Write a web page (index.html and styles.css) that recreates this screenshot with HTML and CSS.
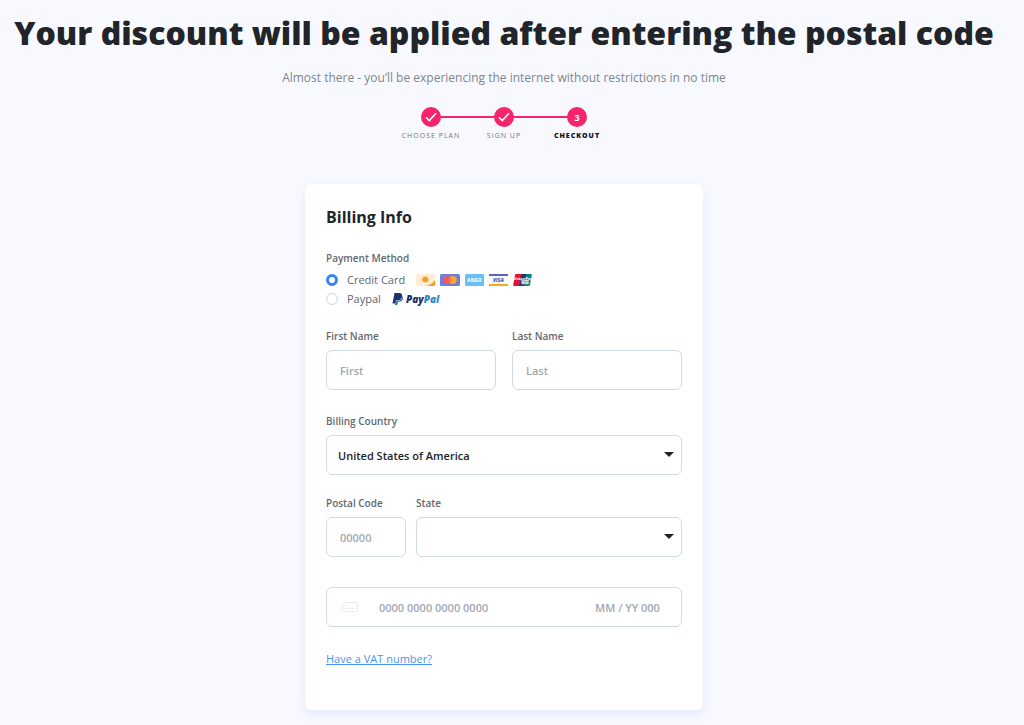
FILE: index.html
```
<!DOCTYPE html>
<html lang="en">
  <head>
    <meta charset="utf-8" />
    <meta name="viewport" content="width=device-width, initial-scale=1" />
    <title>Checkout</title>
    <link rel="stylesheet" href="styles.css" />
  </head>
  <body>
    <header class="page-header">
      <h1>Your discount will be applied after entering the postal code</h1>
      <p class="subtitle">Almost there - you’ll be experiencing the internet without restrictions in no time</p>
      <ol class="steps">
        <li class="step">
          <span class="step-dot">
            <svg width="12" height="10" viewBox="0 0 12 10" fill="none" stroke="#fff" stroke-width="1.6"><path d="M1 5.2 4.3 8.5 11 1.2" /></svg>
          </span>
          <span class="step-name">CHOOSE PLAN</span>
        </li>
        <li class="step">
          <span class="step-dot">
            <svg width="12" height="10" viewBox="0 0 12 10" fill="none" stroke="#fff" stroke-width="1.6"><path d="M1 5.2 4.3 8.5 11 1.2" /></svg>
          </span>
          <span class="step-name">SIGN UP</span>
        </li>
        <li class="step current">
          <span class="step-dot">3</span>
          <span class="step-name">CHECKOUT</span>
        </li>
      </ol>
    </header>

    <main class="card">
      <h2>Billing Info</h2>
      <form>
        <fieldset class="methods">
          <legend>Payment Method</legend>
          <div class="method">
            <input type="radio" name="method" id="creditCard" checked />
            <label for="creditCard">Credit Card</label>
            <span class="brands">
              <!-- Discover -->
              <svg width="19" height="12" viewBox="0 0 19 12">
                <rect width="19" height="12" rx="1.5" fill="#feebd3" />
                <path d="M19 6V10.5Q19 12 17.5 12H10Q16 10.5 19 6Z" fill="#f9a01b" />
                <circle cx="9.3" cy="5.6" r="3" fill="#f6a01a" />
              </svg>
              <!-- Mastercard -->
              <svg width="20" height="12" viewBox="0 0 20 12">
                <rect width="20" height="12" rx="1.5" fill="#6b7fdc" />
                <circle cx="7.2" cy="6" r="4" fill="#ed5a5a" />
                <circle cx="12.8" cy="6" r="4" fill="#f9a533" />
                <path d="M10 3.1a4 4 0 0 1 0 5.8 4 4 0 0 1 0-5.8Z" fill="#f47738" />
              </svg>
              <!-- Amex -->
              <svg width="19" height="12" viewBox="0 0 19 12">
                <rect width="19" height="12" rx="1.5" fill="#69c0f0" />
                <text class="brand-text" x="9.5" y="8" fill="#e6f6fe">AMEX</text>
              </svg>
              <!-- Visa -->
              <svg width="19" height="12" viewBox="0 0 19 12">
                <rect width="19" height="12" fill="#f8f8fc" />
                <rect width="19" height="2" fill="#5b5fc7" />
                <rect y="10" width="19" height="2" fill="#f7a823" />
                <text class="brand-text slanted" x="9.5" y="8" fill="#4d57b5">VISA</text>
              </svg>
              <!-- UnionPay -->
              <svg width="19" height="12" viewBox="0 0 19 12">
                <path d="M3 0H9L6.5 12H1Q0 12 .2 11L2 1Q2.2 0 3 0Z" fill="#dd1436" />
                <path d="M8.5 0H14L11.5 12H6Z" fill="#173f6d" />
                <path d="M13.5 0H18Q19 0 18.8 1L17 11Q16.8 12 16 12H11Z" fill="#137d83" />
                <text class="union-text" x="10" y="5.5" fill="#fff">UnionPay</text>
                <text class="union-text" x="12" y="9.5" fill="#fff">银联</text>
              </svg>
            </span>
          </div>
          <div class="method">
            <input type="radio" name="method" id="paypal" />
            <label for="paypal">Paypal</label>
            <svg width="50" height="14" viewBox="0 0 50 14">
              <path d="M2.5 1H7.5Q10.5 1.2 10 4.4 9.3 8 5.7 8H4L3.4 11.5H.5Z" fill="#1f3264" />
              <path d="M10.4 3.8Q11.4 5 10.8 7 10 9.8 7 9.8H6L5.3 13H3L3.9 8.6H6Q9.8 8.4 10.4 3.8Z" fill="#2670ad" />
              <text class="paypal-text" x="14" y="11" fill="#1f3264">Pay<tspan fill="#3186c8">Pal</tspan></text>
            </svg>
          </div>
        </fieldset>

        <div class="row row-names">
          <div class="field">
            <label for="firstName">First Name</label>
            <input class="control" type="text" id="firstName" placeholder="First" />
          </div>
          <div class="field">
            <label for="lastName">Last Name</label>
            <input class="control" type="text" id="lastName" placeholder="Last" />
          </div>
        </div>

        <div class="row row-country">
          <div class="field">
            <label for="country">Billing Country</label>
            <div class="select-wrap">
              <select class="control" id="country">
                <option>United States of America</option>
              </select>
            </div>
          </div>
        </div>

        <div class="row row-region">
          <div class="field">
            <label for="postalCode">Postal Code</label>
            <input class="control" type="text" id="postalCode" placeholder="00000" />
          </div>
          <div class="field">
            <label for="state">State</label>
            <div class="select-wrap">
              <select class="control" id="state">
                <option></option>
              </select>
            </div>
          </div>
        </div>

        <div class="control card-entry">
          <svg width="16" height="10" viewBox="0 0 16 10" fill="none" stroke="#e9ebed">
            <rect x=".5" y=".5" width="15" height="9" rx="1" />
            <path d="M2.5 3.5H5M2.5 6.5H7M8 6.5H12" />
          </svg>
          <input class="card-number" type="text" aria-label="Card number" placeholder="0000 0000 0000 0000" />
          <input class="card-expiry" type="text" aria-label="Expiry date" placeholder="MM / YY" />
          <input class="card-cvc" type="text" aria-label="CVC" placeholder="000" />
        </div>

        <a class="vat-link" href="#">Have a VAT number?</a>
      </form>
    </main>
  </body>
</html>
```
FILE: styles.css
```
* {
  box-sizing: border-box;
}
body {
  margin: 0;
  padding: 12px 16px 15px 0;
  font-family: "Open Sans", sans-serif;
  color: #212529;
  background-color: #f8f9ff;
}
.page-header {
  text-align: center;
}
h1 {
  margin: 0;
  font-size: 32px;
  line-height: 42px;
  font-weight: 800;
}
.subtitle {
  margin: 12px 0 17px;
  font-size: 12px;
  line-height: 24px;
  color: #7d868c;
}
.steps {
  display: flex;
  justify-content: center;
  margin: 0;
  padding: 0;
  list-style: none;
}
.step {
  display: flex;
  flex-direction: column;
  align-items: center;
  gap: 4px;
  width: 73px;
  position: relative;
}
.step + .step::before {
  content: "";
  position: absolute;
  top: 9px;
  right: 50%;
  width: 100%;
  height: 2px;
  background-color: #f5246b;
}
.step-dot {
  display: flex;
  align-items: center;
  justify-content: center;
  width: 20px;
  height: 20px;
  border-radius: 50%;
  background-color: #f5246b;
  color: #fff;
  font-size: 9px;
  font-weight: 700;
  z-index: 1;
}
.step-name {
  font-size: 7px;
  line-height: 10px;
  letter-spacing: 1px;
  color: #6c757d;
  white-space: nowrap;
}
.current .step-name {
  font-weight: 800;
  color: #111;
}
.card {
  max-width: 398px;
  margin: 43px auto 0;
  padding: 21px 21px 42px;
  border-radius: 6px;
  background-color: #fff;
  box-shadow: 0 4px 12px rgba(80, 110, 255, 0.12);
}
h2 {
  margin: 0 0 22px;
  font-size: 16px;
  line-height: 24px;
  font-weight: 700;
}
.methods {
  margin: 0 0 21px;
  padding: 0;
  border: 0;
}
.methods legend,
.field label {
  display: block;
  padding: 0;
  font-size: 10px;
  line-height: 14px;
  font-weight: 600;
  color: #5f6870;
}
.methods legend {
  margin-bottom: 5px;
}
.method {
  display: flex;
  align-items: center;
  height: 19px;
  font-size: 11px;
  font-weight: 500;
  color: #5f6870;
}
.method input {
  appearance: none;
  width: 12px;
  height: 12px;
  margin: 0 9px 0 0;
  border: 1px solid #ced4da;
  border-radius: 50%;
}
.method input:checked {
  border: 3px solid #3485f7;
}
.method label {
  margin-right: 11px;
}
.brands {
  display: flex;
  gap: 5px;
}
.brand-text {
  font-size: 5px;
  font-weight: 800;
  text-anchor: middle;
}
.slanted {
  font-style: italic;
}
.union-text {
  font-family: "Open Sans", "Noto Sans CJK SC", sans-serif;
  font-size: 4px;
  font-weight: 700;
  text-anchor: middle;
}
.paypal-text {
  font-size: 10px;
  font-weight: 800;
  font-style: italic;
}
.row {
  display: grid;
}
.row-names {
  grid-template-columns: 1fr 1fr;
  gap: 16px;
  margin-bottom: 24px;
}
.row-country {
  margin-bottom: 21px;
}
.row-region {
  grid-template-columns: 80px 1fr;
  gap: 10px;
  margin-bottom: 30px;
}
.field label {
  margin-bottom: 7px;
}
.control {
  display: block;
  width: 100%;
  height: 40px;
  padding: 0 13px;
  border: 1px solid #d0d9e6;
  border-radius: 6px;
  background-color: #fff;
  font-family: inherit;
  font-size: 11px;
  font-weight: 600;
  color: #212529;
}
input::placeholder {
  color: #a1a8af;
  opacity: 1;
}
.select-wrap {
  position: relative;
}
.select-wrap::after {
  content: "";
  position: absolute;
  top: 17px;
  right: 8px;
  border: 5px solid transparent;
  border-top-color: #212529;
  border-bottom: 0;
  pointer-events: none;
}
select.control {
  appearance: none;
  padding: 0 11px;
}
.card-entry {
  display: flex;
  align-items: center;
  padding: 0 15px;
}
.card-entry input {
  min-width: 0;
  padding: 0;
  border: 0;
  background: none;
  font: inherit;
}
.card-number {
  flex: 1;
  margin-left: 21px;
}
.card-expiry {
  width: 46px;
}
.card-cvc {
  width: 25px;
}
.vat-link {
  display: inline-block;
  margin-top: 24px;
  font-size: 11px;
  line-height: 16px;
  color: #4795f7;
}
```
